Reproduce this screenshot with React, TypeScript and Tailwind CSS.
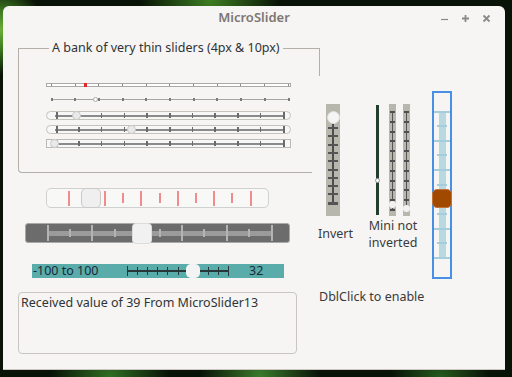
import React from "react";

const range = (n: number) => Array.from({ length: n }, (_, i) => i);

// --- thin sliders in the group box ---

function ThinBar() {
  return (
    <div className="relative w-[245px] h-[4px] border border-[#a9a9a9] bg-white">
      {range(11).map((i) => (
        <span
          key={i}
          className="absolute top-0 h-full w-px bg-[#8c8c8c]"
          style={{ left: 4 + i * 23.67 }}
        />
      ))}
      <span className="absolute -top-px left-[37px] w-[3px] h-[4px] bg-[#e3262b]" />
    </div>
  );
}

function ThinLine() {
  return (
    <div className="relative w-[245px] h-[5px]">
      <span className="absolute left-[5px] w-[237px] top-[2px] h-px bg-[#a6a6a6]" />
      {range(11).map((i) => (
        <span
          key={i}
          className="absolute top-[1px] h-[3px] w-[2px] bg-[#7a7a7a]"
          style={{ left: 4.5 + i * 23.7 }}
        />
      ))}
      <span className="absolute left-[47px] top-0 w-[5px] h-[5px] rounded-full border border-[#ababab] bg-white" />
    </div>
  );
}

function PillSlider({ handle, rounded }: { handle: number; rounded: boolean }) {
  return (
    <div
      className={`relative w-[245px] h-[9px] border bg-[#f7f7f7] ${
        rounded ? "rounded-full border-[#c6c2bc]" : "border-[#b9b9b9]"
      }`}
    >
      <span className="absolute left-[8px] w-[229px] top-[2.5px] h-[2px] bg-[#8a8a8a]" />
      {range(11).map((i) => {
        const end = i === 0 || i === 10;
        return (
          <span
            key={i}
            className={`absolute bg-[#6a6a6a] ${end ? "top-0 h-[7px] w-[2px]" : "top-[1px] h-[5px] w-[1.5px]"}`}
            style={{ left: 8.5 + i * 22.7 }}
          />
        );
      })}
      <span
        className="absolute -top-px w-[9px] h-[9px] rounded-full border border-[#c9c9c9] bg-[#e9e9e9]"
        style={{ left: handle }}
      />
    </div>
  );
}

// --- bigger horizontal sliders ---

function RedTickSlider() {
  return (
    <div className="relative w-[223px] h-[20px] rounded-[5px] border border-[#d0d0d0] bg-[#f8f8f7]">
      {range(11).map((i) => (
        <span
          key={i}
          className={`absolute w-[2px] bg-[#f28b8b] ${i % 2 === 0 ? "top-[2px] h-[15px]" : "top-[4px] h-[10px]"}`}
          style={{ left: 20.5 + i * 18.2 }}
        />
      ))}
      <span className="absolute -top-px left-[34px] w-[20px] h-[20px] rounded-[5px] border border-[#c9c9c9] bg-[#efefef]" />
    </div>
  );
}

function DarkSlider() {
  return (
    <div className="relative w-[265px] h-[20px] rounded-[3px] border border-[#a9a9a9] bg-[#6c6c6c]">
      <span className="absolute left-[21px] w-[224px] top-[6.5px] h-[5px] bg-[#9b9b9b]" />
      {range(11).map((i) => (
        <span
          key={i}
          className={`absolute w-[2px] bg-[#b4b4b4] ${i % 2 === 0 ? "top-[1px] h-[16px]" : "top-[5px] h-[8px]"}`}
          style={{ left: 20.5 + i * 22.4 }}
        />
      ))}
      <span className="absolute -top-px left-[106px] w-[20px] h-[21px] rounded-[4px] border border-[#dcdcdc] bg-[#f1f1f1]" />
    </div>
  );
}

function TealSlider() {
  return (
    <div className="flex items-center w-[252px] h-[14px] bg-[#5aacab] text-[#1b2a37] text-[12.5px] leading-none">
      <span className="w-[95px] pl-[1px]">-100 to 100</span>
      <div className="relative w-[102px] h-[14px]">
        <span className="absolute left-0 right-0 top-[6px] h-[2px] bg-[#27373a]" />
        {range(11).map((i) => {
          const end = i === 0 || i === 10;
          return (
            <span
              key={i}
              className={`absolute w-px bg-[#27373a] ${end ? "top-[2px] h-[10px] w-[2px]" : "top-[3px] h-[8px]"}`}
              style={{ left: i * 10.1 }}
            />
          );
        })}
        <span className="absolute top-0 left-[59px] w-[14px] h-[14px] rounded-[5px] bg-[#f3f3f3]" />
      </div>
      <span className="ml-[20px]">32</span>
    </div>
  );
}

// --- vertical sliders ---

function InvertSlider() {
  return (
    <div className="relative w-[14px] h-[112px] bg-[#b7b7ad]">
      <span className="absolute left-[6px] w-[2px] top-[20px] h-[80px] bg-[#4d4d4d]" />
      {range(10).map((i) => (
        <span
          key={i}
          className={`absolute left-[2px] w-[10px] bg-[#555] ${i === 9 ? "h-[3px]" : "h-[2px]"}`}
          style={{ top: 23 + i * 8.3 }}
        />
      ))}
      <span className="absolute left-[0.5px] top-[7px] w-[13px] h-[13px] rounded-full border border-[#dedede] bg-[#f5f5f5]" />
    </div>
  );
}

function MiniLine() {
  return (
    <div className="relative w-[3px] h-[110px] bg-[#233e2c]">
      <span className="absolute -left-px top-[73px] w-[5px] h-[5px] rounded-full border border-[#9a9a9a] bg-white" />
    </div>
  );
}

function MiniSlider({ handle }: { handle: number }) {
  return (
    <div className="relative w-[7px] h-[112px] bg-[#b7b7ad]">
      <span className="absolute left-[3px] w-px top-[7px] h-[100px] bg-[#555]" />
      {range(11).map((i) => (
        <span
          key={i}
          className="absolute left-[1px] w-[5px] h-[2px] bg-[#4f4f4f]"
          style={{ top: 7 + i * 9.8 }}
        />
      ))}
      <span
        className="absolute left-0 w-[7px] h-[7px] rounded-full bg-[#f2f2f2]"
        style={{ top: handle }}
      />
    </div>
  );
}

function BlueSlider() {
  return (
    <div className="relative w-[20px] h-[188px] border-2 border-[#4890e4] bg-[#f6f5f4]">
      <span className="absolute left-[4.5px] w-[7px] top-[18px] h-[147px] bg-[#b8d8e2]" />
      {range(11).map((i) => (
        <span
          key={i}
          className={`absolute h-[2px] bg-[#a6cddb] ${i % 2 === 0 ? "left-0 w-[16px]" : "left-[3px] w-[10px]"}`}
          style={{ top: 17.5 + i * 14.66 }}
        />
      ))}
      <span className="absolute -left-[2px] -right-[2px] top-[96px] h-[19px] rounded-[5px] border border-[#c3733a] bg-[#a24900]" />
    </div>
  );
}

function TitleButtons() {
  return (
    <div className="flex items-center justify-end gap-[12px] pr-[14px] text-[#8a8a8a]">
      <svg width="9" height="9" viewBox="0 0 9 9">
        <path d="M1 5.5h7" stroke="currentColor" strokeWidth="1.2" />
      </svg>
      <svg width="9" height="9" viewBox="0 0 9 9">
        <path d="M4.5 1v7M1 4.5h7" stroke="currentColor" strokeWidth="1.8" />
      </svg>
      <svg width="9" height="9" viewBox="0 0 9 9">
        <path d="M1.5 1.5l6 6M7.5 1.5l-6 6" stroke="currentColor" strokeWidth="1.8" />
      </svg>
    </div>
  );
}

export default function App() {
  return (
    <div className="w-[512px] h-[377px] overflow-hidden font-['Noto_Sans','DejaVu_Sans',sans-serif] bg-[#081206] bg-[radial-gradient(circle_at_0px_30px,#6cae3a_0px,#3f7d22_18px,transparent_45px),radial-gradient(ellipse_at_210px_0px,#3d7d22_0px,transparent_70px),radial-gradient(ellipse_at_110px_377px,#2f6e22_0px,transparent_60px),radial-gradient(ellipse_at_260px_377px,#3a7a2c_0px,transparent_60px),radial-gradient(ellipse_at_440px_377px,#245a1c_0px,transparent_50px)]">
      <div className="ml-[3px] mt-[6px] w-[502px] h-[364px] rounded-t-[6px] bg-[#f6f5f4] border-b border-[#cbc6c1] flex flex-col">
        {/* title bar */}
        <div className="h-[24px] grid grid-cols-[1fr_auto_1fr] items-center">
          <span />
          <span className="text-[13px] font-semibold text-[#7d7672]">MicroSlider</span>
          <TitleButtons />
        </div>

        {/* body */}
        <div className="flex text-[12.5px] text-[#3a3a3a]">
          {/* left column */}
          <div className="pl-[15px] w-[309px] flex flex-col">
            <div className="relative mt-[18px] w-[294px] h-[125px] border-l border-t border-b border-[#b3b0aa] rounded-bl-[4px] pl-[27px] pt-[34px] flex flex-col">
              <span className="absolute -top-[10px] left-[30px] px-[3px] bg-[#f6f5f4] text-[#2e3436] leading-[18px]">
                A bank of very thin sliders (4px &amp; 10px)
              </span>
              <span className="absolute -top-px -right-[8px] w-[8px] h-[28px] border-t border-r border-[#b3b0aa]" />
              <ThinBar />
              <div className="mt-[10px]">
                <ThinLine />
              </div>
              <div className="mt-[9px]">
                <PillSlider handle={25} rounded />
              </div>
              <div className="mt-[5px]">
                <PillSlider handle={80} rounded />
              </div>
              <div className="mt-[5px]">
                <PillSlider handle={3} rounded={false} />
              </div>
            </div>

            <div className="mt-[15px] ml-[28px]">
              <RedTickSlider />
            </div>
            <div className="mt-[15px] ml-[7px]">
              <DarkSlider />
            </div>
            <div className="mt-[21px] ml-[14px]">
              <TealSlider />
            </div>
            <div className="mt-[14px] w-[279px] h-[62px] rounded-[4px] border border-[#c9c6c2] px-[2px] pt-[1px] text-[#2e3436] leading-[18px]">
              Received value of 39 From MicroSlider13
            </div>
          </div>

          {/* right column */}
          <div className="flex flex-col">
            <div className="flex items-start">
              <div className="ml-[6px] mt-[74px] w-[36px] flex flex-col">
                <div className="ml-[8px]">
                  <InvertSlider />
                </div>
                <span className="mt-[10px] leading-[16px]">Invert</span>
              </div>
              <div className="ml-[13px] mt-[74px] w-[52px] flex flex-col items-center">
                <div className="flex items-start">
                  <div className="mt-[1px]">
                    <MiniLine />
                  </div>
                  <div className="ml-[10px]">
                    <MiniSlider handle={97} />
                  </div>
                  <div className="ml-[7px]">
                    <MiniSlider handle={101} />
                  </div>
                </div>
                <div className="mt-[1px] flex flex-col items-center leading-[17px]">
                  <span>Mini not</span>
                  <span>inverted</span>
                </div>
              </div>
              <div className="ml-[13px] mt-[61px]">
                <BlueSlider />
              </div>
            </div>
            <span className="mt-[10px] ml-[7px] leading-[16px]">DblClick to enable</span>
          </div>
        </div>
      </div>
    </div>
  );
}
